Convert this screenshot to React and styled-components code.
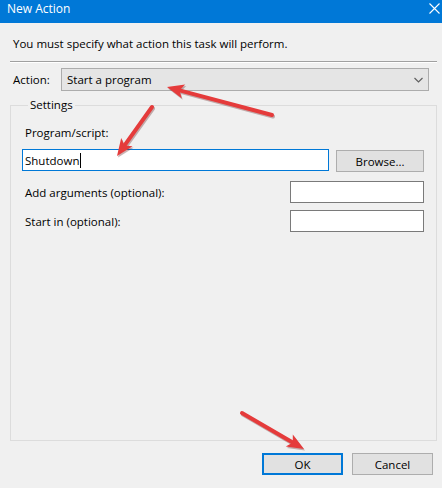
import React from 'react'
import styled, { createGlobalStyle } from 'styled-components';

const GlobalStyle = createGlobalStyle`
  html, body {
    margin: 0;
    padding: 0;
    background: #f0f0f0;
  }
  * {
    box-sizing: border-box;
  }
`;

const Window = styled.div`
  position: relative;
  width: 442px;
  height: 488px;
  overflow: hidden;
  background: #f0f0f0;
  font-family: "Open Sans", "Noto Sans", sans-serif;
  font-size: 11.5px;
  color: #000;
  display: flex;
  flex-direction: column;
`;

const TitleBar = styled.div`
  height: 23px;
  background: #0078d7;
  color: #fff;
  font-size: 12px;
  display: flex;
  align-items: flex-start;
  justify-content: space-between;
  padding: 1px 2px 0 7px;
  line-height: 16px;
`;

const CloseIcon = styled.svg`
  margin-top: 2px;
  width: 11px;
  height: 11px;
`;

const Body = styled.div`
  padding: 13px 5px 0 10px;
  display: flex;
  flex-direction: column;
`;

const Intro = styled.div`
  padding-left: 3px;
  line-height: 16px;
`;

const Separator = styled.div`
  margin-top: 9px;
  height: 2px;
  border-top: 1px solid #a0a0a0;
  border-bottom: 1px solid #ffffff;
`;

const ActionRow = styled.div`
  margin-top: 5px;
  display: flex;
  align-items: center;
  padding-left: 3px;
`;

const ActionLabel = styled.span`
  width: 48px;
`;

const Select = styled.div`
  width: 368px;
  height: 23px;
  background: #e5e5e5;
  border: 1px solid #acacac;
  display: flex;
  align-items: center;
  justify-content: space-between;
  padding: 0 5px 0 5px;
`;

const Fieldset = styled.fieldset`
  margin: 7px 0 0 0;
  padding: 0 12px 0 11px;
  height: 343px;
  border: 1px solid #dcdcdc;
  min-width: 0;
`;

const Legend = styled.legend`
  margin-left: 6px;
  padding: 0 2px;
  line-height: 14px;
`;

const FieldLabel = styled.div`
  padding-left: 3px;
  line-height: 16px;
  margin-top: ${({ $top }) => $top}px;
`;

const Row = styled.div`
  display: flex;
  align-items: center;
  justify-content: space-between;
  margin-top: ${({ $top }) => $top}px;
`;

const TextBox = styled.div`
  width: ${({ $width }) => $width}px;
  height: 22px;
  background: #fff;
  border: 1px solid ${({ $focused }) => ($focused ? '#0078d7' : '#7a7a7a')};
  display: flex;
  align-items: center;
  padding-left: 2px;
`;

const Caret = styled.span`
  display: inline-block;
  width: 1px;
  height: 15px;
  background: #000;
  margin-left: 1px;
`;

const Button = styled.div`
  width: ${({ $width }) => $width}px;
  height: 22px;
  background: #e1e1e1;
  border: ${({ $primary }) => ($primary ? '2px solid #0078d7' : '1px solid #adadad')};
  display: flex;
  align-items: center;
  justify-content: center;
  margin-top: ${({ $offset }) => $offset || 0}px;
`;

const Footer = styled.div`
  display: flex;
  justify-content: flex-end;
  gap: 9px;
  padding: 12px 9px 0 0;
`;

const Overlay = styled.svg`
  position: absolute;
  left: 0;
  top: 0;
  width: 442px;
  height: 488px;
  pointer-events: none;
`;

const arrows = [
  { from: [272, 115], to: [167, 87] },
  { from: [152, 107], to: [117, 156] },
  { from: [242, 413], to: [304, 449] },
];

const Arrow = ({ from, to }) => {
  const [x1, y1] = from;
  const [x2, y2] = to;
  const dx = x2 - x1;
  const dy = y2 - y1;
  const len = Math.hypot(dx, dy);
  const ux = dx / len;
  const uy = dy / len;
  const head = 17;
  const half = 7;
  const bx = x2 - ux * head;
  const by = y2 - uy * head;
  const points = `${x2},${y2} ${bx - uy * half},${by + ux * half} ${bx + ux * 4},${by + uy * 4} ${bx + uy * half},${by - ux * half}`;
  return (
    <g>
      <g transform="translate(1,1.5)" opacity="0.35">
        <line x1={x1} y1={y1} x2={bx + ux * 4} y2={by + uy * 4} stroke="#6b2a2a" strokeWidth="4" strokeLinecap="round" />
        <polygon points={points} fill="#6b2a2a" />
      </g>
      <line x1={x1} y1={y1} x2={bx + ux * 4} y2={by + uy * 4} stroke="#e53b3b" strokeWidth="4" strokeLinecap="round" />
      <polygon points={points} fill="#e53b3b" />
    </g>
  );
};

const App = () => {
  return (
    <>
      <GlobalStyle />
      <Window>
        <TitleBar>
          <span>New Action</span>
          <CloseIcon viewBox="0 0 11 11">
            <path d="M0.5 0.5 L10.5 10.5 M10.5 0.5 L0.5 10.5" stroke="#fff" strokeWidth="1.1" />
          </CloseIcon>
        </TitleBar>
        <Body>
          <Intro>You must specify what action this task will perform.</Intro>
          <Separator />
          <ActionRow>
            <ActionLabel>Action:</ActionLabel>
            <Select>
              <span>Start a program</span>
              <svg width="9" height="6" viewBox="0 0 9 6">
                <path d="M0.5 1 L4.5 5 L8.5 1" fill="none" stroke="#606060" strokeWidth="1.2" />
              </svg>
            </Select>
          </ActionRow>
          <Fieldset>
            <Legend>Settings</Legend>
            <FieldLabel $top={13}>Program/script:</FieldLabel>
            <Row $top={7}>
              <TextBox $width={307} $focused>
                Shutdown<Caret />
              </TextBox>
              <Button $width={88} $offset={2}>Browse...</Button>
            </Row>
            <Row $top={9}>
              <FieldLabel $top={2}>Add arguments (optional):</FieldLabel>
              <TextBox $width={134} />
            </Row>
            <Row $top={7}>
              <FieldLabel $top={2}>Start in (optional):</FieldLabel>
              <TextBox $width={134} />
            </Row>
          </Fieldset>
        </Body>
        <Footer>
          <Button $width={81} $primary>OK</Button>
          <Button $width={81}>Cancel</Button>
        </Footer>
        <Overlay viewBox="0 0 442 488">
          {arrows.map((a, i) => (
            <Arrow key={i} from={a.from} to={a.to} />
          ))}
        </Overlay>
      </Window>
    </>
  )
}
export default App
